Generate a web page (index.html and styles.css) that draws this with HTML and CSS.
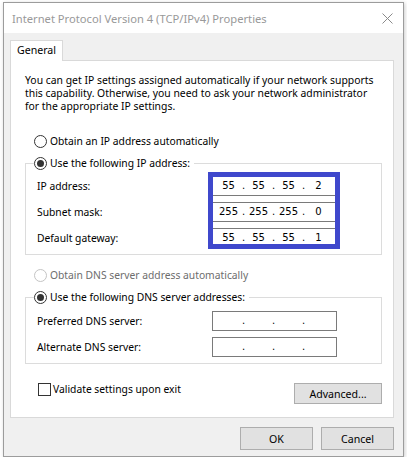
FILE: index.html
```html
<!DOCTYPE html>
<html lang="en">
<head>
    <meta charset="UTF-8">
    <title>Internet Protocol Version 4 (TCP/IPv4) Properties</title>
    <link rel="stylesheet" href="styles.css">
</head>
<body>
    <div class="window">
        <div class="titlebar">
            <span class="title">Internet Protocol Version 4 (TCP/IPv4) Properties</span>
            <svg class="close" width="11" height="11" viewBox="0 0 11 11">
                <path d="M0.5 0.5 L10.5 10.5 M10.5 0.5 L0.5 10.5" />
            </svg>
        </div>

        <div class="main">
            <div class="tabs">
                <div class="tab">General</div>
            </div>

            <div class="panel">
                <div class="intro">
                    <div>You can get IP settings assigned automatically if your network supports</div>
                    <div>this capability. Otherwise, you need to ask your network administrator</div>
                    <div>for the appropriate IP settings.</div>
                </div>

                <div class="radio first"><span class="mark"></span>Obtain an IP address automatically</div>

                <!-- Static IP group -->
                <fieldset class="group">
                    <legend><div class="radio checked"><span class="mark"></span>Use the following IP address:</div></legend>
                    <div class="rows">
                        <div class="labels">
                            <span>IP address:</span>
                            <span>Subnet mask:</span>
                            <span>Default gateway:</span>
                        </div>
                        <div class="fields">
                            <div class="ip"><span class="seg">55</span><span class="dot">.</span><span class="seg">55</span><span class="dot">.</span><span class="seg">55</span><span class="dot">.</span><span class="seg">2</span></div>
                            <div class="ip"><span class="seg">255</span><span class="dot">.</span><span class="seg">255</span><span class="dot">.</span><span class="seg">255</span><span class="dot">.</span><span class="seg">0</span></div>
                            <div class="ip"><span class="seg">55</span><span class="dot">.</span><span class="seg">55</span><span class="dot">.</span><span class="seg">55</span><span class="dot">.</span><span class="seg">1</span></div>
                            <div class="highlight"></div>
                        </div>
                    </div>
                </fieldset>

                <div class="radio disabled dns-auto"><span class="mark"></span>Obtain DNS server address automatically</div>

                <!-- DNS group -->
                <fieldset class="group dns">
                    <legend><div class="radio checked"><span class="mark"></span>Use the following DNS server addresses:</div></legend>
                    <div class="rows">
                        <div class="labels">
                            <span>Preferred DNS server:</span>
                            <span>Alternate DNS server:</span>
                        </div>
                        <div class="fields">
                            <div class="ip"><span class="seg"></span><span class="dot">.</span><span class="seg"></span><span class="dot">.</span><span class="seg"></span><span class="dot">.</span><span class="seg"></span></div>
                            <div class="ip"><span class="seg"></span><span class="dot">.</span><span class="seg"></span><span class="dot">.</span><span class="seg"></span><span class="dot">.</span><span class="seg"></span></div>
                        </div>
                    </div>
                </fieldset>

                <div class="bottom-row">
                    <div class="check"><span class="box"></span>Validate settings upon exit</div>
                    <button class="btn advanced">Advanced...</button>
                </div>
            </div>

            <div class="actions">
                <button class="btn">OK</button>
                <button class="btn">Cancel</button>
            </div>
        </div>
    </div>
</body>
</html>
```

FILE: styles.css
```css
/* General */
body {
    margin: 0;
    background: #ffffff;
    font-family: "Noto Sans", sans-serif;
    font-size: 10.3px;
    color: #000;
}

/* Dialog window */
.window {
    box-sizing: border-box;
    width: 401px;
    height: 455px;
    margin: 2px 0 0 3px;
    border: 1px solid #9c9c9c;
    background: #f0f0f0;
    display: flex;
    flex-direction: column;
    box-shadow: 1px 1px 4px rgba(0, 0, 0, 0.2);
}

.titlebar {
    height: 30px;
    flex-shrink: 0;
    background: #ffffff;
    display: flex;
    align-items: center;
    justify-content: space-between;
    padding: 0 10px 0 8px;
}

.title {
    color: #999999;
    font-size: 11.2px;
}

.close {
    stroke: #8a8a8a;
    stroke-width: 1;
    fill: none;
}

.main {
    padding: 7px 9px 0 6px;
    display: flex;
    flex-direction: column;
}

/* Tab strip */
.tabs {
    display: flex;
    height: 20px;
}

.tab {
    box-sizing: border-box;
    width: 53px;
    height: 21px;
    padding-left: 6px;
    line-height: 19px;
    background: #ffffff;
    border: 1px solid #d9d9d9;
    border-bottom: none;
    margin-bottom: -1px;
    position: relative;
    z-index: 1;
    font-size: 10.6px;
}

.panel {
    box-sizing: border-box;
    height: 358px;
    background: #ffffff;
    border: 1px solid #d9d9d9;
    padding: 13px 10px 0 14px;
    white-space: nowrap;
}

.intro {
    line-height: 13px;
    font-size: 10.4px;
}

.intro div {
    height: 13px;
}

/* Radio buttons */
.radio {
    display: flex;
    align-items: center;
    line-height: 14px;
    margin-left: 9px;
}

.radio .mark {
    box-sizing: border-box;
    width: 13px;
    height: 13px;
    border: 1px solid #333333;
    border-radius: 50%;
    background: #ffffff;
    margin-right: 3px;
    display: flex;
    align-items: center;
    justify-content: center;
}

.radio.checked .mark::after {
    content: "";
    width: 7px;
    height: 7px;
    border-radius: 50%;
    background: #333333;
}

.radio.disabled {
    color: #6d6d6d;
}

.radio.disabled .mark {
    border-color: #c4c4c4;
}

.radio.first {
    margin-top: 21px;
}

.radio.dns-auto {
    margin-top: 13px;
}

/* Group boxes */
.group {
    margin: 8px 1px 0 0;
    padding: 6px 8px 6px;
    border: 1px solid #dcdcdc;
    min-width: 0;
}

.group.dns {
    padding-top: 7px;
}

.group legend {
    padding: 0 4px 0 0;
}

.group legend .radio {
    margin-left: 0;
}

.rows {
    display: flex;
}

.labels {
    box-sizing: border-box;
    width: 178px;
    padding-left: 3px;
    display: flex;
    flex-direction: column;
    gap: 6px;
}

.labels span {
    height: 20px;
    line-height: 20px;
}

.fields {
    position: relative;
    display: flex;
    flex-direction: column;
    gap: 6px;
}

/* IP address boxes */
.ip {
    box-sizing: border-box;
    width: 125px;
    height: 20px;
    padding-left: 2px;
    border: 1px solid #7a7a7a;
    background: #ffffff;
    display: flex;
    font-family: "DejaVu Sans", sans-serif;
    font-size: 10px;
    line-height: 18px;
}

.ip .seg {
    width: 27px;
    text-align: center;
}

.ip .dot {
    width: 3px;
    text-align: center;
}

/* Annotation frame drawn over the fields */
.highlight {
    position: absolute;
    top: -4px;
    left: -4px;
    right: -3px;
    bottom: -1px;
    border: 5px solid #3f48cc;
}

/* Checkbox + Advanced */
.bottom-row {
    display: flex;
    justify-content: space-between;
    align-items: flex-start;
    margin-top: 18px;
}

.check {
    display: flex;
    align-items: center;
    line-height: 14px;
    margin-left: 13px;
}

.check .box {
    box-sizing: border-box;
    width: 13px;
    height: 13px;
    border: 1px solid #333333;
    background: #ffffff;
    margin-right: 2px;
}

.btn {
    box-sizing: border-box;
    height: 23px;
    padding: 0;
    border: 1px solid #adadad;
    background: #e1e1e1;
    color: #000;
    font: inherit;
    font-size: 10.6px;
}

.btn.advanced {
    width: 88px;
    height: 21px;
    margin: 1px 1px 0 0;
}

.actions {
    display: flex;
    justify-content: flex-end;
    gap: 8px;
    margin-top: 9px;
}

.actions .btn {
    width: 73px;
}
```
